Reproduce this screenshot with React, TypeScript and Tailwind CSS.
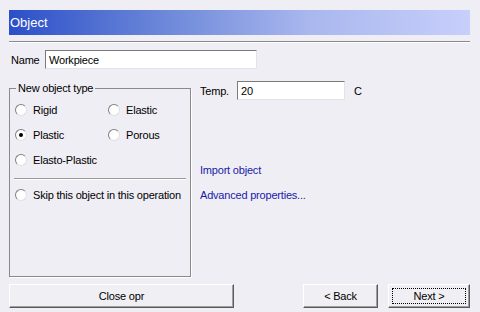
const font = { fontFamily: '"Liberation Sans", Arial, sans-serif' };

function Radio({ checked }: { checked?: boolean }) {
  return (
    <span className="relative inline-block h-[12px] w-[12px] shrink-0 rounded-full border border-t-[#808080] border-l-[#808080] border-b-[#e0e0e0] border-r-[#e0e0e0] bg-white">
      {checked && (
        <span className="absolute left-[3px] top-[3px] h-[4px] w-[4px] rounded-full bg-black" />
      )}
    </span>
  );
}

function RadioItem({ label, checked, w }: { label: string; checked?: boolean; w?: string }) {
  return (
    <div className={`flex h-[16px] items-center gap-[6px] whitespace-nowrap ${w ?? ""}`}>
      <Radio checked={checked} />
      <span>{label}</span>
    </div>
  );
}

function Button({ children, w, focus }: { children: React.ReactNode; w: string; focus?: boolean }) {
  return (
    <div
      className={`${w} relative flex h-[24px] items-center justify-center border border-t-white border-l-white border-b-[#5a5a5a] border-r-[#5a5a5a] bg-[#f0eff4] shadow-[inset_-1px_-1px_0_#a0a0a0]`}
    >
      {focus && <span className="absolute inset-x-[3px] inset-y-[3px] border border-dotted border-black" />}
      <span>{children}</span>
    </div>
  );
}

export default function App() {
  return (
    <div
      className="h-[312px] w-[480px] bg-[#efeef4] px-[9px] pt-[10px] text-[11px] leading-[16px] tracking-[-0.2px] text-black"
      style={font}
    >
      <div className="flex h-[25px] w-[461px] items-center bg-[linear-gradient(to_right,#2b4fc8,#6f8ada_35%,#a9b7ee_65%,#c7cffb)] pl-[1px] text-[13px] tracking-normal text-white">
        Object
      </div>
      <div className="mt-[6px] w-[461px] border-t border-t-[#8a8a8a] border-b border-b-white" />
      <div className="mt-[7px] flex h-[19px] items-center">
        <span className="ml-[2px] w-[34px]">Name</span>
        <div className="flex h-[19px] w-[212px] items-center border border-t-[#7a7a7a] border-l-[#7a7a7a] border-b-[#e4e4e4] border-r-[#e4e4e4] bg-white pl-[3px]">
          Workpiece
        </div>
      </div>
      <div className="mt-[12px] flex">
        <div className="relative mt-[7px] h-[189px] w-[182px] border border-[#8a8a8a] shadow-[1px_1px_0_white]">
          <span className="absolute left-[6px] top-[-9px] bg-[#efeef4] px-[2px]">New object type</span>
          <div className="flex flex-col gap-[9px] pl-[5px] pt-[13px]">
            <div className="flex">
              <RadioItem label="Rigid" w="w-[93px]" />
              <RadioItem label="Elastic" />
            </div>
            <div className="flex">
              <RadioItem label="Plastic" checked w="w-[93px]" />
              <RadioItem label="Porous" />
            </div>
            <div className="flex">
              <RadioItem label="Elasto-Plastic" />
            </div>
          </div>
          <div className="mx-[4px] mt-[10px] border-t border-t-[#9a9a9a] border-b border-b-white" />
          <div className="pl-[5px] pt-[7px]">
            <RadioItem label="Skip this object in this operation" />
          </div>
        </div>
        <div className="ml-[8px] flex flex-col">
          <div className="flex h-[19px] items-center">
            <span className="ml-px w-[37px]">Temp.</span>
            <div className="flex h-[19px] w-[108px] items-center border border-t-[#7a7a7a] border-l-[#7a7a7a] border-b-[#e4e4e4] border-r-[#e4e4e4] bg-white pl-[3px]">
              20
            </div>
            <span className="ml-[9px]">C</span>
          </div>
          <span className="ml-px mt-[62px] text-[#1a1aa8]">Import object</span>
          <span className="ml-px mt-[9px] text-[#1a1aa8]">Advanced properties...</span>
        </div>
      </div>
      <div className="mt-[7px] flex">
        <Button w="w-[225px]">Close opr</Button>
        <div className="ml-auto mr-[1px] flex gap-[10px]">
          <Button w="w-[75px]">&lt; Back</Button>
          <Button w="w-[82px]" focus>
            Next &gt;
          </Button>
        </div>
      </div>
    </div>
  );
}
